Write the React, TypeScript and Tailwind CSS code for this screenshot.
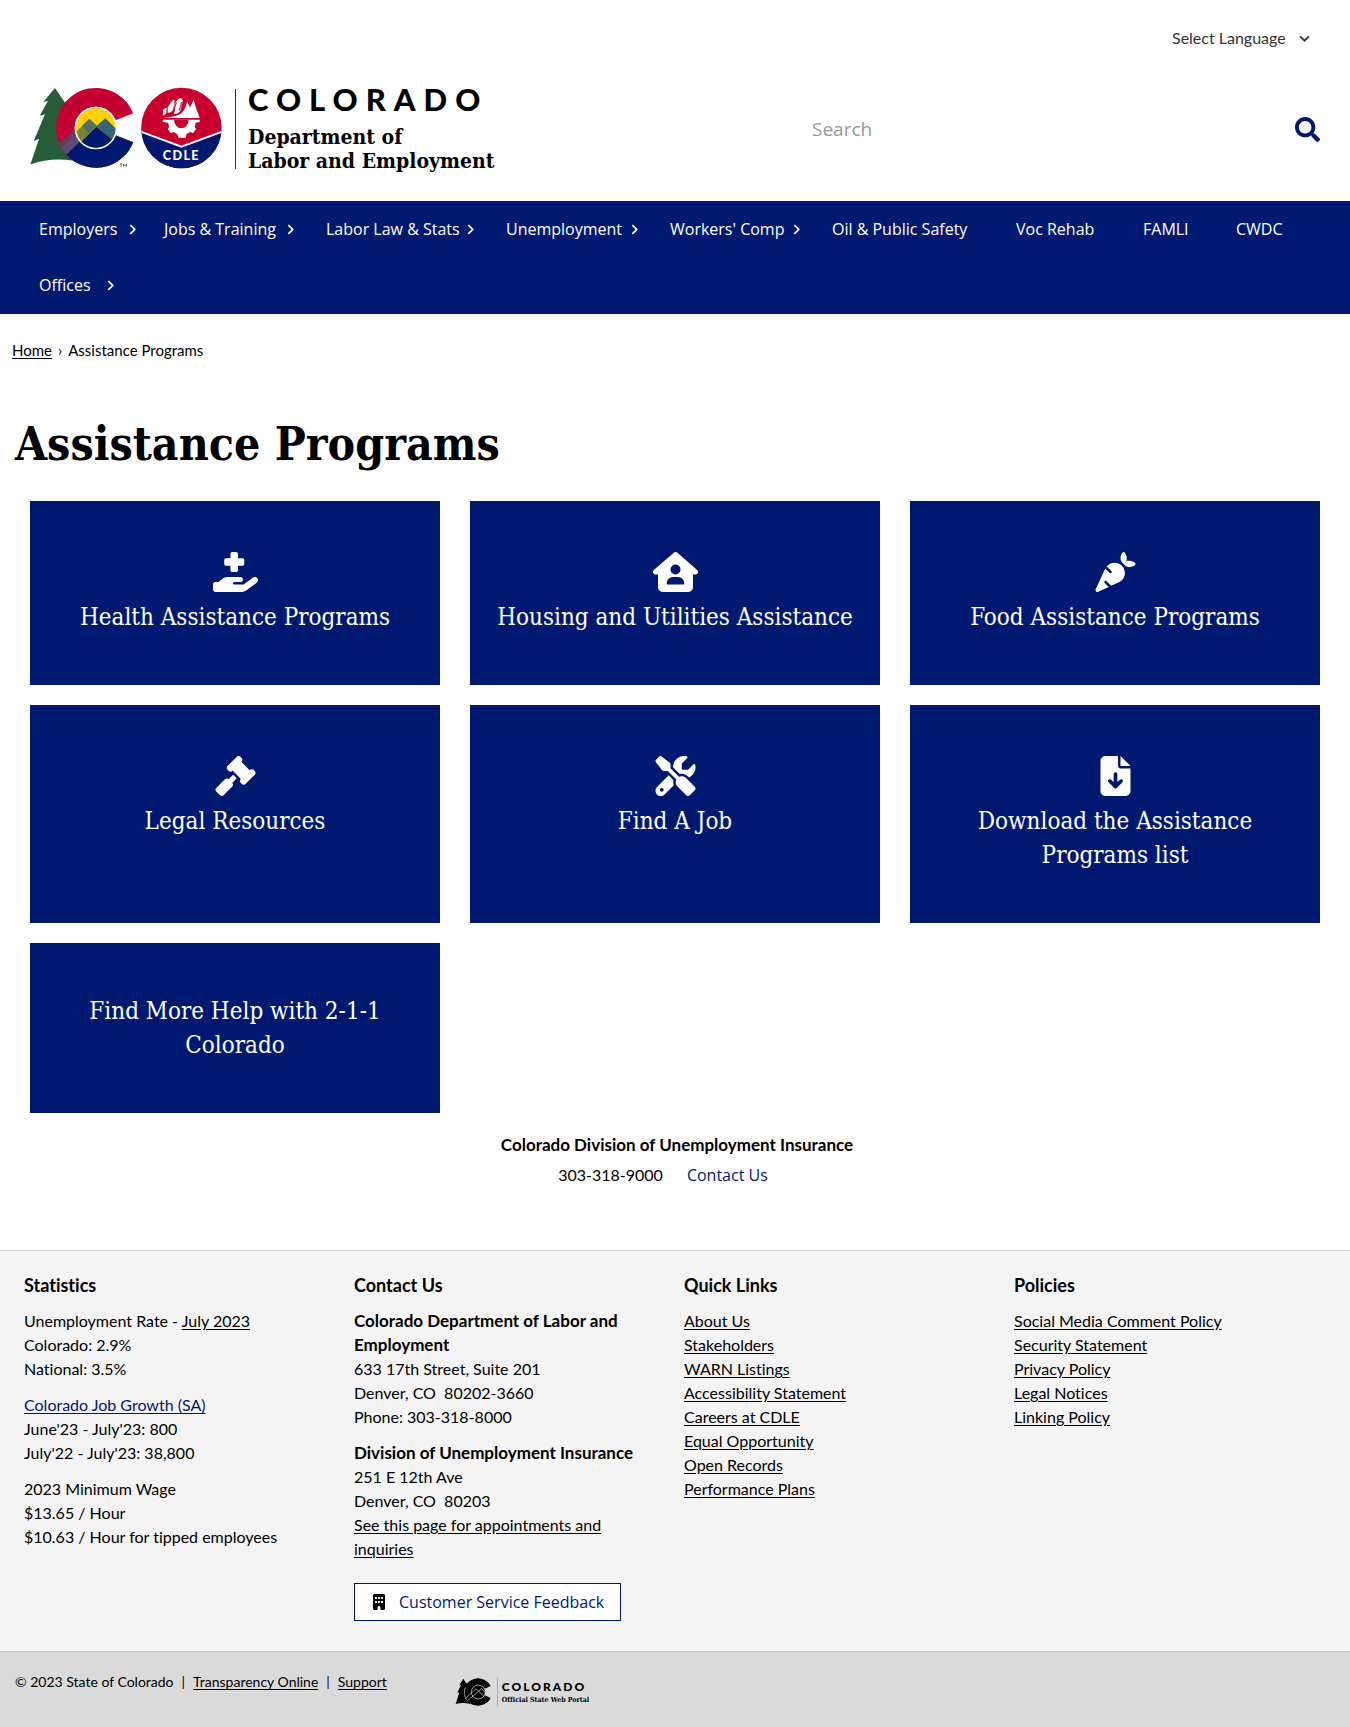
import React from "react";
import type { ReactNode } from "react";
import {
  FaHandHoldingMedical,
  FaHouseUser,
  FaCarrot,
  FaGavel,
  FaScrewdriverWrench,
  FaFileArrowDown,
  FaBuilding,
} from "react-icons/fa6";
import { FaSearch } from "react-icons/fa";
import type { IconType } from "react-icons";

const slab = "font-['DejaVu_Serif_Condensed','DejaVu_Serif',serif]";
const humanist = "font-['Open_Sans',sans-serif]";

function StateLogo() {
  return (
    <svg viewBox="30 51 580 249" className="mt-0.5 h-[83px] w-[193px] shrink-0" role="img" aria-label="Colorado Department of Labor and Employment logo">
      <defs>
        <clipPath id="c-shape">
          <path d="M340 130 A120 120 0 1 0 340 217 L287 196 A63 63 0 1 1 287 151 Z" />
        </clipPath>
        <clipPath id="c-inner">
          <circle cx="228" cy="174" r="59" />
        </clipPath>
        <clipPath id="cdle-disc">
          <circle cx="485" cy="174" r="121" />
        </clipPath>
      </defs>
      <path d="M105 54 L70 96 L84 93 L59 137 L75 133 L41 213 L57 207 L31 284 Q90 262 158 272 L175 200 L137 100 Z" fill="#245d38" />
      <g clipPath="url(#c-shape)">
        <rect x="100" y="40" width="260" height="260" fill="#c3002f" />
        <path d="M120 262 L182 205 L300 180 L360 190 V300 H120 Z" fill="#001970" />
        <path d="M104 230 L176 170 L190 200 L135 256 Z" fill="#6d3a5d" />
        <path d="M118 240 L178 186 L190 205 L136 258 Z" fill="#5c4a78" />
      </g>
      <circle cx="228" cy="174" r="64" fill="#fff" />
      <g clipPath="url(#c-inner)">
        <rect x="160" y="100" width="140" height="140" fill="#ffd100" />
        <path d="M160 194 L208 146 L232 168 L256 145 L300 188 V240 H160 Z" fill="#7a8235" />
        <path d="M231 168 L256 145 L300 188 L290 220 Z" fill="#35647e" />
        <path d="M186 168 L208 146 L231 168 L208 190 Z" fill="#52705f" />
        <path d="M160 240 L230 170 L300 228 V240 Z" fill="#001970" />
      </g>
      <path d="M300 282 h8 M304 282 v9 M311 291 v-9 l4 6 l5 -6 v9" fill="none" stroke="#333" strokeWidth="2" />
      <g clipPath="url(#cdle-disc)">
        <rect x="360" y="50" width="250" height="250" fill="#c8002f" />
        <path d="M360 184 L485 230 L610 184 V300 H360 Z" fill="#001970" />
        <path d="M360 184 L485 230 L610 184" fill="none" stroke="#fff" strokeWidth="6" />
      </g>
      <g fill="#fff">
        <path d="M430 119 l8 -6 l3 2 l-2 16 l-10 6 Z" />
        <path d="M444 112 l14 -21 q4 -4 7 1 l-5 28 q-6 9 -16 9 Z" />
        <path d="M464 105 l9 -17 q14 -8 16 3 l-7 31 q-7 11 -20 10 l4 -12 Z" />
        <path d="M497 112 l5 -17 l9 17 l11 -22 l9 30 l9 24 h-107 l34 -6 q22 -4 30 -26 Z" />
        <path d="M429 149 h111 v7 l-12 2 l-3 12 l4 8 l-9 11 l-9 -3 l-11 7 l-2 10 h-22 l-3 -10 l-11 -7 l-9 3 l-9 -11 l4 -8 l-3 -12 l-16 -2 Z" />
      </g>
      <path d="M463 149 a22 26 0 0 0 44 0 Z" fill="#c8002f" />
      <path d="M470 98 l-8 22 M486 96 l-8 26" stroke="#c8002f" strokeWidth="3" fill="none" />
      <text x="485" y="270" textAnchor="middle" fontFamily="Lato, sans-serif" fontWeight="900" fontSize="38" letterSpacing="4" fill="#fff">CDLE</text>
    </svg>
  );
}

function PortalMark() {
  return (
    <svg viewBox="0 0 106 84" className="h-7 w-9 shrink-0" aria-hidden="true">
      <path d="M24 2 L12 22 L17 21 L6 44 L12 43 L1 78 Q24 72 44 78 L60 40 L30 12 Z" fill="#000" />
      <path d="M106 24 A42 41 0 1 0 106 60 L88 52 A21 21 0 1 1 88 32 Z" fill="#000" />
      <circle cx="69" cy="42" r="21" fill="#000" />
      <g fill="none" stroke="#dadada" strokeWidth="2">
        <circle cx="69" cy="42" r="21" />
        <path d="M30 28 A42 41 0 0 0 34 66" />
        <path d="M30 62 L62 32 L70 40 L78 31 L90 44" />
        <path d="M34 70 L70 40 L86 56" />
      </g>
    </svg>
  );
}

function Chevron({ className, down = false }: { className?: string; down?: boolean }) {
  return (
    <svg viewBox="0 0 10 10" className={className} fill="none" stroke="currentColor" strokeWidth="1.6" aria-hidden="true">
      <path d={down ? "M1 3 L5 7 L9 3" : "M3 1 L7 5 L3 9"} />
    </svg>
  );
}

const navItems: { label: string; width: string; chevron?: string }[] = [
  { label: "Employers", width: "w-[125px]", chevron: "mr-0.5" },
  { label: "Jobs & Training", width: "w-[162px]", chevron: "mr-1.5" },
  { label: "Labor Law & Stats", width: "w-[180px]", chevron: "mr-1.5" },
  { label: "Unemployment", width: "w-[164px]", chevron: "mr-1.5" },
  { label: "Workers' Comp", width: "w-[162px]", chevron: "mr-1.5" },
  { label: "Oil & Public Safety", width: "w-[184px]" },
  { label: "Voc Rehab", width: "w-[127px]" },
  { label: "FAMLI", width: "w-[93px]" },
  { label: "CWDC", width: "w-[93px]" },
  { label: "Offices", width: "w-[125px]", chevron: "mr-6" },
];

const cards: { label: string; icon?: IconType }[] = [
  { label: "Health Assistance Programs", icon: FaHandHoldingMedical },
  { label: "Housing and Utilities Assistance", icon: FaHouseUser },
  { label: "Food Assistance Programs", icon: FaCarrot },
  { label: "Legal Resources", icon: FaGavel },
  { label: "Find A Job", icon: FaScrewdriverWrench },
  { label: "Download the Assistance Programs list", icon: FaFileArrowDown },
  { label: "Find More Help with 2-1-1 Colorado" },
];

const quickLinks = [
  "About Us",
  "Stakeholders",
  "WARN Listings",
  "Accessibility Statement",
  "Careers at CDLE",
  "Equal Opportunity",
  "Open Records",
  "Performance Plans",
];

const policies = [
  "Social Media Comment Policy",
  "Security Statement",
  "Privacy Policy",
  "Legal Notices",
  "Linking Policy",
];

function FooterColumn({ title, children }: { title: string; children: ReactNode }) {
  return (
    <section className="flex flex-col gap-3 px-6 lg:pr-4">
      <h2 className="text-[18px] font-bold leading-6">{title}</h2>
      {children}
    </section>
  );
}

function Link({ children, className = "" }: { children: ReactNode; className?: string }) {
  return (
    <a href="#" className={`underline underline-offset-2 ${className}`}>
      {children}
    </a>
  );
}

function LinkList({ items }: { items: string[] }) {
  return (
    <ul>
      {items.map((item) => (
        <li key={item}>
          <Link>{item}</Link>
        </li>
      ))}
    </ul>
  );
}

export default function App() {
  return (
    <div className="bg-white font-['Lato',sans-serif] text-base text-black [font-variant-ligatures:none]">
      <header>
        <div className="flex justify-end px-8 pt-6">
          <div className="relative flex items-center text-[#333]">
            <select aria-label="Language" className="appearance-none bg-transparent pr-8 text-base leading-7">
              <option>Select Language</option>
            </select>
            <Chevron down className="pointer-events-none absolute right-2 size-[11px]" />
          </div>
        </div>
        <div className="flex flex-wrap items-center justify-between gap-y-6 px-[30px] pt-[33px] pb-7">
          <a href="#" className="flex items-start text-black">
            <StateLogo />
            <span className="mt-1 ml-3 h-20 w-px bg-[#333]" />
            <span className="ml-3 flex flex-col">
              <span className="text-[31px] font-black leading-7 tracking-[8px]">COLORADO</span>
              <span className={`mt-3 text-[21px] font-bold leading-6 ${slab}`}>
                Department of
                <br />
                Labor and Employment
              </span>
            </span>
          </a>
          <form role="search" className="flex w-[508px] items-center" onSubmit={(e) => e.preventDefault()}>
            <input
              type="search"
              aria-label="Search"
              placeholder="Search"
              className={`min-w-0 flex-1 bg-transparent text-[19px] leading-7 outline-none placeholder:text-[#999] ${humanist}`}
            />
            <button type="submit" aria-label="Submit search" className="text-[#001970]">
              <FaSearch className="size-[25px]" />
            </button>
          </form>
        </div>
      </header>

      <nav aria-label="Main" className={`bg-[#001970] px-[15px] pb-px text-white ${humanist}`}>
        <ul className="flex flex-wrap">
          {navItems.map((item) => (
            <li key={item.label} className={item.width}>
              <a href="#" className="flex items-center justify-between py-4 pl-6 leading-6 whitespace-nowrap">
                {item.label}
                {item.chevron && <Chevron className={`size-[11px] shrink-0 ${item.chevron}`} />}
              </a>
            </li>
          ))}
        </ul>
      </nav>

      <main>
        <nav aria-label="Breadcrumb" className="px-3 pt-6 text-[15px] leading-6">
          <ol className="flex items-center gap-1.5">
            <li>
              <Link>Home</Link>
            </li>
            <li aria-hidden="true">›</li>
            <li>Assistance Programs</li>
          </ol>
        </nav>
        <h1 className={`px-[15px] pt-[54px] pb-[29px] text-[46px] font-bold leading-[56px] ${slab}`}>Assistance Programs</h1>

        <div className="grid grid-cols-1 gap-x-[30px] gap-y-5 px-[30px] md:grid-cols-2 lg:grid-cols-3">
          {cards.map(({ label, icon: Icon }) => (
            <a
              key={label}
              href="#"
              className={`flex flex-col items-center gap-2 bg-[#001970] px-5 py-[51px] text-center text-2xl leading-[34px] text-white ${slab}`}
            >
              {Icon && <Icon className="h-10 w-[45px]" />}
              <span>{label}</span>
            </a>
          ))}
        </div>

        <section className="flex flex-col items-center gap-1.5 pt-5 pb-[63px]">
          <h2 className="pl-1 text-[17px] font-bold leading-6">Colorado Division of Unemployment Insurance</h2>
          <p className="flex gap-6 pr-6 leading-6">
            <span>303-318-9000</span>
            <a href="#" className={`text-[#001970] ${humanist}`}>Contact Us</a>
          </p>
        </section>
      </main>

      <footer>
        <div className="border-t border-[#d0d0d0] bg-[#f4f4f4] pt-[22px] pb-[30px] leading-6 lg:pr-[30px]">
          <div className="grid grid-cols-1 gap-y-8 sm:grid-cols-2 lg:grid-cols-4">
            <FooterColumn title="Statistics">
              <p>
                Unemployment Rate - <Link>July 2023</Link>
                <br />
                Colorado: 2.9%
                <br />
                National: 3.5%
              </p>
              <p>
                <Link className="text-[#001970]">Colorado Job Growth (SA)</Link>
                <br />
                June'23 - July'23: 800
                <br />
                July'22 - July'23: 38,800
              </p>
              <p>
                2023 Minimum Wage
                <br />
                $13.65 / Hour
                <br />
                $10.63 / Hour for tipped employees
              </p>
            </FooterColumn>
            <FooterColumn title="Contact Us">
              <p>
                <strong className="text-[17px]">Colorado Department of Labor and Employment</strong>
                <br />
                633 17th Street, Suite 201
                <br />
                Denver, CO&nbsp; 80202-3660
                <br />
                Phone: 303-318-8000
              </p>
              <p>
                <strong className="text-[17px]">Division of Unemployment Insurance</strong>
                <br />
                251 E 12th Ave
                <br />
                Denver, CO&nbsp; 80203
                <br />
                <Link>See this page for appointments and inquiries</Link>
              </p>
              <a
                href="#"
                className={`mt-2.5 flex w-fit items-center gap-3 border border-[#001970] bg-white px-4 py-1.5 text-[#001970] ${humanist}`}
              >
                <FaBuilding className="size-4 text-black" />
                Customer Service Feedback
              </a>
            </FooterColumn>
            <FooterColumn title="Quick Links">
              <LinkList items={quickLinks} />
            </FooterColumn>
            <FooterColumn title="Policies">
              <LinkList items={policies} />
            </FooterColumn>
          </div>
        </div>
        <div className="flex flex-wrap items-start gap-x-[68px] border-t border-[#c8c8c8] bg-[#dadada] px-[15px] pt-[18px] pb-[22px]">
          <p className="flex gap-2 text-[14px] leading-6">
            <span>© 2023 State of Colorado</span>
            <span>|</span>
            <Link>Transparency Online</Link>
            <span>|</span>
            <Link>Support</Link>
          </p>
          <a href="#" className="flex items-center pt-2">
            <PortalMark />
            <span className="ml-1.5 h-7 w-px bg-[#aaa]" />
            <span className="ml-1 flex flex-col">
              <span className="text-[12px] font-black leading-4 tracking-[2px]">COLORADO</span>
              <span className={`text-[7px] font-bold leading-[10px] ${slab}`}>Official State Web Portal</span>
            </span>
          </a>
        </div>
      </footer>
    </div>
  );
}
